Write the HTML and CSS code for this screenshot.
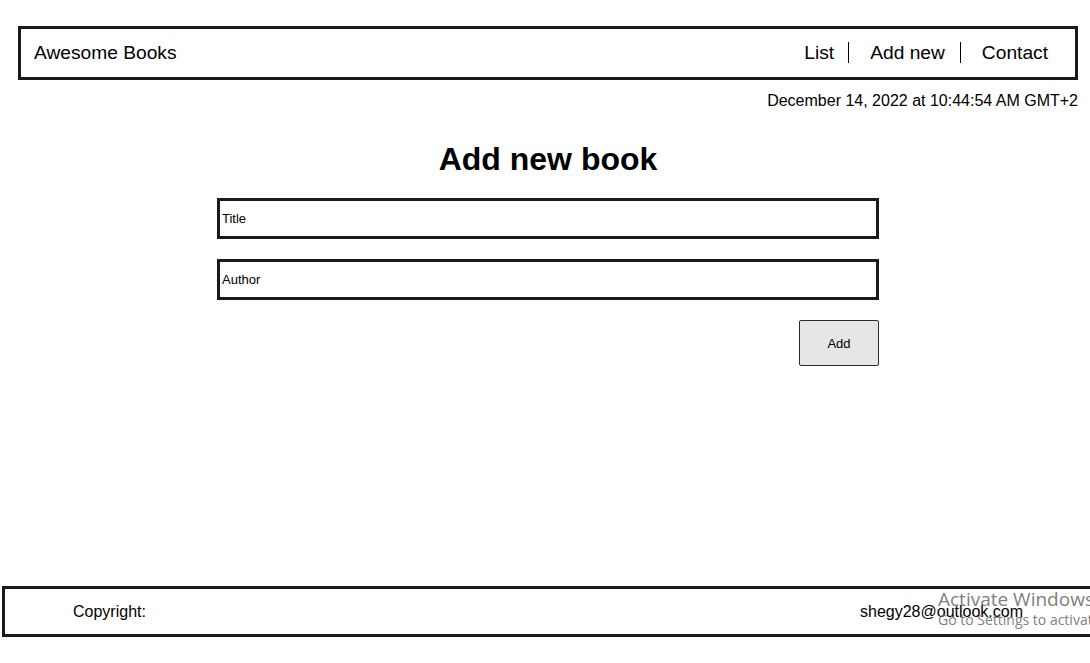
FILE: index.html
```html
<!DOCTYPE html>
<html lang="en">
<head>
<meta charset="utf-8">
<title>Awesome Books</title>
<link rel="stylesheet" href="styles.css">
</head>
<body>
<div class="page">
  <header class="topbar">
    <span class="brand">Awesome Books</span>
    <ul class="nav">
      <li>List</li>
      <li>Add new</li>
      <li>Contact</li>
    </ul>
  </header>
  <p class="date">December 14, 2022 at 10:44:54 AM GMT+2</p>
  <main class="add-section">
    <h1 class="title">Add new book</h1>
    <form class="book-form">
      <input class="field" type="text" placeholder="Title">
      <input class="field" type="text" placeholder="Author">
      <div class="actions"><button class="add-btn" type="button">Add</button></div>
    </form>
  </main>
  <footer class="footer">
    <span>Copyright:</span>
    <span>shegy28@outlook.com</span>
  </footer>
</div>
<div class="watermark">
  <div class="wm-title">Activate Windows</div>
  <div class="wm-sub">Go to Settings to activate Windows.</div>
</div>
</body>
</html>
```
FILE: styles.css
```css
html, body {
  margin: 0;
  padding: 0;
  overflow: hidden;
}
body {
  font-family: "Liberation Sans", Arial, sans-serif;
  color: #000;
  background: #fff;
}
.page {
  min-height: 663px;
  display: flex;
  flex-direction: column;
  padding-top: 26px;
  box-sizing: border-box;
}
.topbar {
  margin-left: 18px;
  width: 1060px;
  height: 54px;
  box-sizing: border-box;
  border: 3px solid #1a1a1a;
  display: flex;
  align-items: center;
  justify-content: space-between;
  padding: 0 12px 0 13px;
}
.brand {
  font-size: 19.2px;
}
.nav {
  list-style: none;
  margin: 0 0 2px;
  padding: 0;
  display: flex;
  font-size: 19.2px;
}
.nav li {
  padding: 0 15px 0 21px;
  line-height: 21px;
}
.nav li:first-child {
  padding-left: 0;
  padding-right: 14px;
}
.nav li + li {
  border-left: 1px solid #000;
}
.date {
  margin: 12px 0 0 18px;
  width: 1060px;
  text-align: right;
  font-size: 16px;
  line-height: 18px;
}
.add-section {
  margin-left: 18px;
  width: 1060px;
  display: flex;
  flex-direction: column;
  align-items: center;
}
.title {
  margin: 31px 0 21px;
  font-size: 32px;
  line-height: 36px;
  font-weight: bold;
}
.book-form {
  width: 662px;
  display: flex;
  flex-direction: column;
  gap: 20px;
}
.field {
  height: 41px;
  box-sizing: border-box;
  border: 3px solid #1a1a1a;
  padding: 0 2px;
  margin: 0;
  font-family: "Liberation Sans", Arial, sans-serif;
  font-size: 13px;
  outline: none;
}
.field::placeholder {
  color: #000;
  opacity: 1;
}
.actions {
  display: flex;
  justify-content: flex-end;
}
.add-btn {
  width: 80px;
  height: 46px;
  background: #e6e6e6;
  border: 1px solid #2b2b2b;
  border-radius: 2px;
  font-family: "Liberation Sans", Arial, sans-serif;
  font-size: 13px;
  color: #000;
  padding: 0;
}
.footer {
  margin-top: auto;
  margin-bottom: 26px;
  margin-left: 2px;
  width: 1092px;
  height: 51px;
  box-sizing: border-box;
  border: 3px solid #1a1a1a;
  display: flex;
  align-items: center;
  justify-content: space-between;
  padding: 0 68px;
  font-size: 16px;
}
.watermark {
  position: absolute;
  left: 938px;
  top: 587px;
  color: rgba(110, 110, 110, 0.9);
  font-family: "Open Sans", "Noto Sans", sans-serif;
  white-space: nowrap;
  pointer-events: none;
}
.wm-title {
  font-size: 19px;
  line-height: 24px;
}
.wm-sub {
  font-size: 14px;
  line-height: 18px;
}
```
